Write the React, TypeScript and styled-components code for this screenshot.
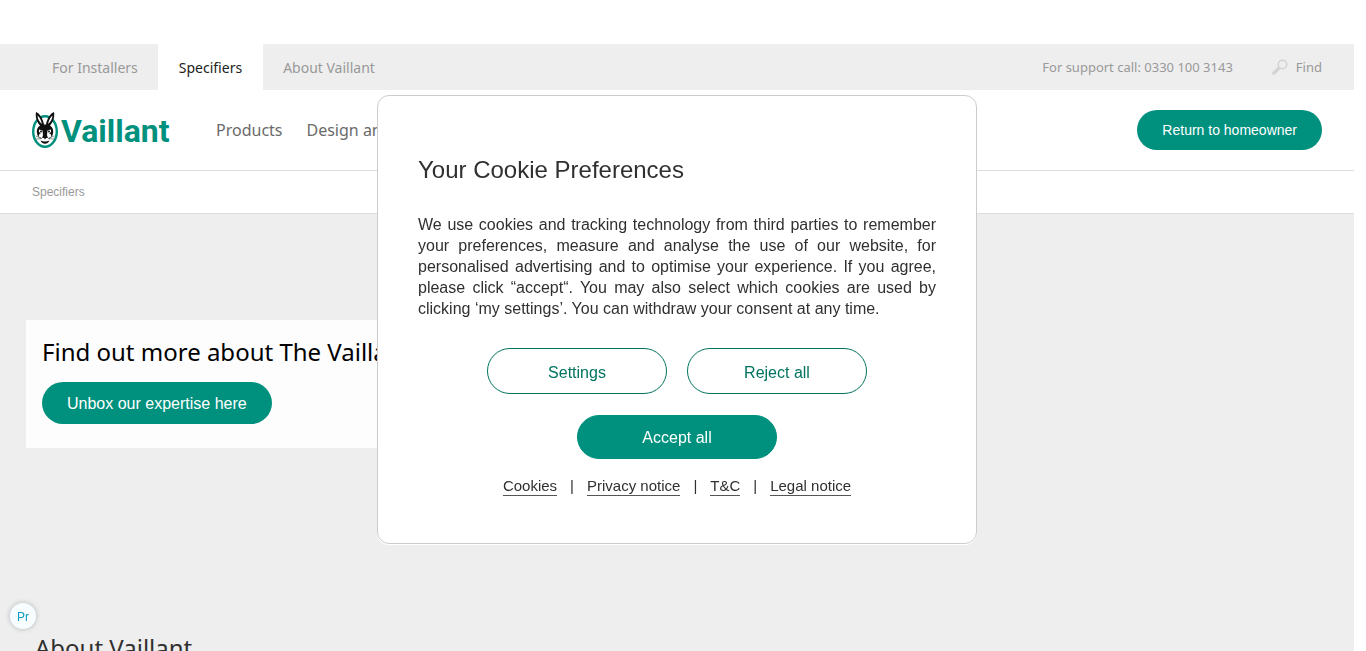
import React from "react";
import styled, { createGlobalStyle } from "styled-components";

const GlobalStyle = createGlobalStyle`
  *, *::before, *::after { box-sizing: border-box; }
  html, body, #root { height: 100%; }
  body {
    margin: 0;
    overflow: hidden;
    background: #fff;
    color: #303030;
    font-family: "Liberation Sans", Arial, sans-serif;
  }
  a { color: inherit; text-decoration: none; }
  button { font-family: inherit; cursor: pointer; }
  h1, h2, p { margin: 0; font-weight: 400; }
`;

const brandFont = `"Noto Sans", "Open Sans", sans-serif`;
const green = "#00917e";
const darkGreen = "#00735f";

const Page = styled.div`
  display: flex;
  flex-direction: column;
  height: 100%;
  margin-right: 12px;
  padding-top: 44px;
  overflow: hidden;
`;

const TopBar = styled.div`
  display: flex;
  flex: none;
  justify-content: space-between;
  height: 46px;
  padding: 0 32px;
  background: #eee;
  font-family: ${brandFont};
  color: #999;
`;

const Tabs = styled.nav`
  display: flex;
`;

const Tab = styled.a<{ $active?: boolean }>`
  display: flex;
  align-items: center;
  padding: 0 ${(p) => (p.$active ? 21 : 20)}px;
  font-size: 14px;
  color: ${(p) => (p.$active ? "#222" : "#999")};
  background: ${(p) => (p.$active ? "#fff" : "transparent")};
`;

const Tools = styled.div`
  display: flex;
  align-items: center;
  gap: 38px;
  font-size: 13px;
`;

const FindLink = styled.a`
  display: flex;
  align-items: center;
  gap: 8px;
`;

const Header = styled.header`
  display: flex;
  flex: none;
  align-items: center;
  height: 81px;
  padding: 0 32px;
  border-bottom: 1px solid #ddd;
`;

const Logo = styled.a`
  display: flex;
  flex: none;
  align-items: flex-end;
  gap: 2px;
  width: 136px;
  margin-right: 48px;
  color: ${green};
  font: 700 32px/36px Roboto, sans-serif;

  svg { flex: none; }
`;

const MainNav = styled.nav`
  display: flex;
  flex: 1;
  gap: 24px;
  font: 16px/24px ${brandFont};
  color: #6b6b6b;
`;

const PillButton = styled.button<{ $size?: "small" | "large" }>`
  height: ${(p) => (p.$size === "small" ? 40 : 42)}px;
  padding: ${(p) => (p.$size === "small" ? "0 25px" : "2px 25px 0")};
  border: 0;
  border-radius: 21px;
  background: ${green};
  color: #fff;
  font-size: ${(p) => (p.$size === "small" ? 14 : 16)}px;
`;

const Breadcrumb = styled.nav`
  display: flex;
  flex: none;
  align-items: center;
  height: 43px;
  padding: 0 32px;
  border-bottom: 1px solid #ddd;
  font-size: 12px;
  color: #999;
`;

const Main = styled.main`
  flex: 1;
  min-height: 0;
  padding: 106px 26px 0;
  background: #eee;
`;

const Teaser = styled.section`
  width: 50%;
  height: 128px;
  padding: 16px;
  background: #fdfdfd;
`;

const TeaserTitle = styled.h1`
  margin-bottom: 14px;
  color: #000;
  font: 24px/32px ${brandFont};
`;

const SectionTitle = styled.h2`
  margin: 184px 0 0 9px;
  font: 24px/32px ${brandFont};
`;

const Overlay = styled.div`
  position: fixed;
  inset: 0 12px 12px 0;
  display: flex;
  align-items: center;
  justify-content: center;
`;

const Dialog = styled.section`
  width: 600px;
  max-width: 100%;
  padding: 58px 40px 47px;
  border: 1px solid #ccc;
  border-radius: 12px;
  background: #fff;
  box-shadow: 0 1px 0 #fff;
`;

const DialogTitle = styled.h2`
  margin-bottom: 28px;
  font-size: 24px;
  line-height: 32px;
`;

const DialogText = styled.p`
  margin-bottom: 29px;
  font-size: 16px;
  line-height: 21px;
  text-align: justify;
`;

const Choices = styled.div`
  display: flex;
  flex-wrap: wrap;
  justify-content: center;
  gap: 21px 20px;
`;

const ChoiceButton = styled.button<{ $primary?: boolean }>`
  width: ${(p) => (p.$primary ? 200 : 180)}px;
  height: ${(p) => (p.$primary ? 44 : 46)}px;
  padding: ${(p) => (p.$primary ? 2 : 4)}px 0 0;
  border: 1px solid ${(p) => (p.$primary ? green : darkGreen)};
  border-radius: 23px;
  background: ${(p) => (p.$primary ? green : "#fff")};
  color: ${(p) => (p.$primary ? "#fff" : darkGreen)};
  font-size: 16px;
`;

const LegalLinks = styled.nav`
  display: flex;
  justify-content: center;
  gap: 13px;
  margin-top: 18px;
  font-size: 15px;
  line-height: 18px;
`;

const LegalLink = styled.a`
  border-bottom: 1px solid #555;
`;

const PrivacyBadge = styled.button`
  position: fixed;
  left: 10px;
  bottom: 22px;
  width: 26px;
  height: 26px;
  padding: 2px 0 0;
  border: 0;
  border-radius: 50%;
  background: #f8fdff;
  box-shadow: 0 0 4px 1px #c4c8ca;
  color: #0a9fc4;
  font-size: 12px;
`;

const HareMark = () => (
  <svg width="27" height="38" viewBox="0 0 27 38" aria-hidden="true">
    <ellipse cx="13" cy="20.5" rx="11.8" ry="15.3" fill="#fff" stroke={green} strokeWidth="2.4" />
    <path d="M4 1C8 2.500 11 8 12 13.500h2C15 8 18 2.500 22 1c1 5-1 10.500-4 13.500 2.500 1.500 3.800 4.500 3 8-.5 2.500-1.700 4.500-3.500 5.500L13 30l-4.500-2C6.700 27 5.500 25 5 22.500c-.8-3.500.5-6.500 3-8C5 11.500 3 6 4 1Z" fill="#111" />
    <path d="M5.500 4.500c2 1.800 3.800 4.700 4.400 8.500C7.300 11 5.700 8 5.500 4.500Zm15 0c-2 1.800-3.800 4.700-4.400 8.500 2.600-2 4.200-5 4.400-8.500Z" fill="#fff" />
    <path d="M7 18.500l3.500 1 .5 4.500-1 3.500-3.300-1.500.3-2.500 1.800-1.300L7 21ZM19 18.500l-3.500 1L15 24l1 3.500 3.300-1.500-.3-2.500-1.800-1.300L19 21Z" fill="#fff" />
    <path d="M10.500 27h5l3 1.500-2.500 3.500h-6l-2.500-3.500Z" fill="#fff" />
    <circle cx="9" cy="20.500" r="1" fill="#111" />
    <circle cx="17" cy="20.500" r="1" fill="#111" />
    <path d="M11 25.500h4l-2 3ZM8.500 29.500c3 1.300 6 1.300 9 0-1 2.300-2.500 3.200-4.500 3.200s-3.500-.9-4.500-3.200Z" fill="#111" />
    <path d="M3.500 25l6 2M3.800 28l5.700-.3M22.500 25l-6 2M22.200 28l-5.700-.3" stroke="#777" strokeWidth=".8" />
  </svg>
);

const SearchIcon = () => (
  <svg width="17" height="17" viewBox="0 0 17 17" fill="none" aria-hidden="true">
    <circle cx="11.500" cy="5.500" r="4.300" stroke="#d2d2d2" strokeWidth="1.500" />
    <path d="M8.200 8.800 1.800 15.200" stroke="#d2d2d2" strokeWidth="3.200" />
  </svg>
);

const legalLinks = ["Cookies", "Privacy notice", "T&C", "Legal notice"];

export default function App() {
  return (
    <>
      <GlobalStyle />
      <Page>
        <TopBar>
          <Tabs>
            <Tab href="#">For Installers</Tab>
            <Tab href="#" $active>Specifiers</Tab>
            <Tab href="#">About Vaillant</Tab>
          </Tabs>
          <Tools>
            <span>For support call: 0330 100 3143</span>
            <FindLink href="#"><SearchIcon />Find</FindLink>
          </Tools>
        </TopBar>
        <Header>
          <Logo href="#"><HareMark />Vaillant</Logo>
          <MainNav>
            <a href="#">Products</a>
            <a href="#">Design and</a>
          </MainNav>
          <PillButton type="button" $size="small">Return to homeowner</PillButton>
        </Header>
        <Breadcrumb><a href="#">Specifiers</a></Breadcrumb>
        <Main>
          <Teaser>
            <TeaserTitle>Find out more about The Vaillant</TeaserTitle>
            <PillButton type="button">Unbox our expertise here</PillButton>
          </Teaser>
          <SectionTitle>About Vaillant</SectionTitle>
        </Main>
      </Page>
      <PrivacyBadge type="button">Pr</PrivacyBadge>
      <Overlay>
        <Dialog role="dialog" aria-labelledby="cookie-title">
          <DialogTitle id="cookie-title">Your Cookie Preferences</DialogTitle>
          <DialogText>
            We use cookies and tracking technology from third parties to remember your preferences,
            measure and analyse the use of our website, for personalised advertising and to optimise
            your experience. If you agree, please click “accept“. You may also select which cookies
            are used by clicking ‘my settings’. You can withdraw your consent at any time.
          </DialogText>
          <Choices>
            <ChoiceButton type="button">Settings</ChoiceButton>
            <ChoiceButton type="button">Reject all</ChoiceButton>
            <ChoiceButton type="button" $primary>Accept all</ChoiceButton>
          </Choices>
          <LegalLinks>
            {legalLinks.map((label, i) => (
              <React.Fragment key={label}>
                {i > 0 && <span>|</span>}
                <LegalLink href="#">{label}</LegalLink>
              </React.Fragment>
            ))}
          </LegalLinks>
        </Dialog>
      </Overlay>
    </>
  );
}
